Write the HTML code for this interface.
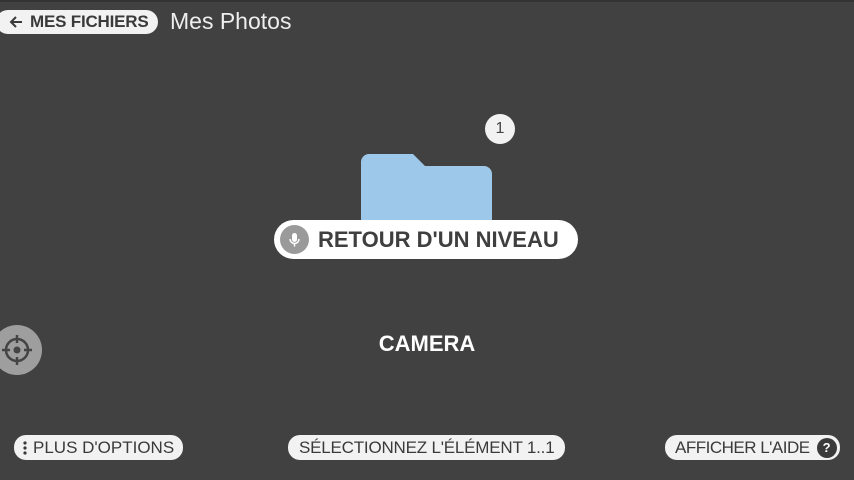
<!DOCTYPE html><html><head><style>
body{margin:0;width:854px;height:480px;background:#414141;position:relative;overflow:hidden;font-family:"Liberation Sans",sans-serif}
.pill{position:absolute;background:#f2f2f2;color:#3a3a3a;border-radius:12px;font-size:17px;white-space:nowrap;display:flex;align-items:center}
.top{position:absolute;left:0;top:0;width:854px;height:2px;background:#333}
</style></head><body>
<div class="top"></div>
<div class="pill" style="left:-4px;top:10px;height:24px;padding:0 9px 0 12px;font-size:17px;font-weight:bold;letter-spacing:-0.2px">
<svg width="16" height="14" viewBox="0 0 16 14" style="margin-right:6px"><path d="M14 7H3M8 2L3 7l5 5" stroke="#3a3a3a" stroke-width="2" fill="none"/></svg>MES FICHIERS</div>
<div style="position:absolute;left:170px;top:8px;color:#eee;font-size:23px">Mes Photos</div>
<div style="position:absolute;left:485px;top:114px;width:30px;height:30px;border-radius:50%;background:#f2f2f2;color:#444;font-size:16px;text-align:center;line-height:30px">1</div>
<svg style="position:absolute;left:361px;top:152px" width="131" height="70" viewBox="0 0 131 70"><path d="M0 10a8 8 0 0 1 8-8h44l12 12h59a8 8 0 0 1 8 8v48H0z" fill="#9dc8ea"/></svg>
<div class="pill" style="left:274px;top:220px;height:39px;border-radius:20px;padding:0 19px 0 6px;font-size:22px;font-weight:bold;background:#fff;color:#3f3f3f">
<span style="width:29px;height:29px;border-radius:50%;background:#9a9a9a;display:inline-block;margin-right:9px;position:relative"><svg width="29" height="29" viewBox="0 0 29 29"><rect x="12" y="8" width="5" height="9" rx="2.5" fill="#fff"/><path d="M10 14a4.5 4.5 0 0 0 9 0M14.5 18.5v3" stroke="#fff" stroke-width="1.5" fill="none"/></svg></span>RETOUR D'UN NIVEAU</div>
<div style="position:absolute;left:0;width:854px;top:331px;text-align:center;color:#fff;font-size:22px;font-weight:bold">CAMERA</div>
<svg style="position:absolute;left:-8px;top:325px" width="50" height="50" viewBox="0 0 50 50"><circle cx="25" cy="25" r="25" fill="#9e9e9e"/><circle cx="25" cy="25" r="11" stroke="#444" stroke-width="2.5" fill="none"/><circle cx="25" cy="25" r="3.5" fill="#444"/><path d="M25 10v8M25 32v8M10 25h8M32 25h8" stroke="#444" stroke-width="2.5"/></svg>
<div class="pill" style="left:14px;top:435px;height:25px;padding:0 9px 0 8px">
<svg width="6" height="14" viewBox="0 0 6 14" style="margin-right:5px"><circle cx="3" cy="2" r="1.6" fill="#3a3a3a"/><circle cx="3" cy="7" r="1.6" fill="#3a3a3a"/><circle cx="3" cy="12" r="1.6" fill="#3a3a3a"/></svg>PLUS D'OPTIONS</div>
<div class="pill" style="left:288px;top:435px;height:25px;padding:0 11px;letter-spacing:-0.2px">SÉLECTIONNEZ L'ÉLÉMENT 1..1</div>
<div class="pill" style="left:665px;top:435px;height:25px;padding:0 3px 0 10px;letter-spacing:-0.5px">AFFICHER L'AIDE<span style="display:inline-block;width:20px;height:20px;border-radius:50%;background:#3a3a3a;color:#fff;font-size:13px;text-align:center;line-height:20px;margin-left:7px;font-weight:bold;letter-spacing:0">?</span></div>
</body></html>
